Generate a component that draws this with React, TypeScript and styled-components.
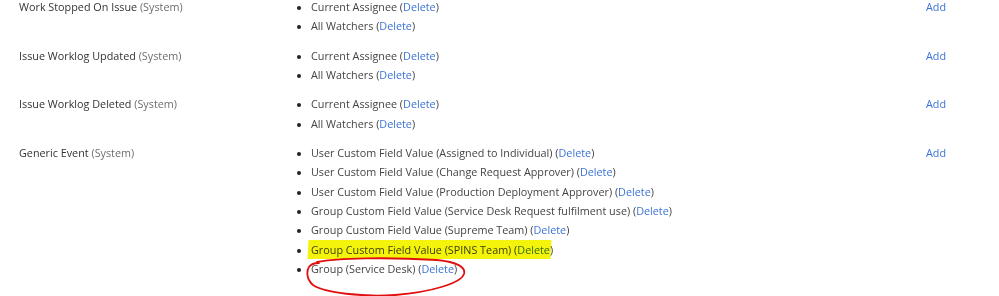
import styled, { createGlobalStyle } from 'styled-components';

const GlobalStyle = createGlobalStyle`
    html {
        overflow: hidden;
    }
    html, body {
        margin: 0;
        padding: 0;
        background: #ffffff;
    }
    body {
        font-family: "Open Sans", "Noto Sans", sans-serif;
        font-size: 10.8px;
        color: #333333;
        min-height: 296px;
    }
`;

const Table = styled.div`
    width: 999px;
    margin-top: -8px;
`;

const EventRow = styled.div`
    display: grid;
    grid-template-columns: 288px 1fr 90px;
    padding: 5px 0;
    line-height: 19.33px;
`;

const EventName = styled.div`
    padding-left: 19px;
    color: #333333;
`;

const Scope = styled.span`
    color: #6e6e6e;
`;

const List = styled.ul`
    margin: 0;
    padding: 0 0 0 23px;
    list-style: disc;
`;

const Item = styled.li`
    position: relative;
    color: #444444;
    &::marker {
        color: #222222;
        font-size: 10px;
    }
`;

const Link = styled.a`
    color: #3b73d6;
    text-decoration: none;
    cursor: pointer;
`;

const AddLink = styled(Link)`
    padding-left: 17px;
`;

const Marker = styled.span`
    position: relative;
    &::after {
        content: '';
        position: absolute;
        left: -3px;
        right: -1px;
        top: -2px;
        bottom: -2px;
        background: #f3f30c;
        mix-blend-mode: multiply;
        transform: skewX(-3deg);
    }
`;

const Scribble = styled.svg`
    position: absolute;
    left: -4px;
    top: -1px;
    overflow: visible;
    pointer-events: none;
`;

type Recipient = { label: string; marked?: boolean; circled?: boolean };

type EventDef = { name: string; recipients: Recipient[] };

const events: EventDef[] = [
    {
        name: 'Work Stopped On Issue',
        recipients: [{ label: 'Current Assignee' }, { label: 'All Watchers' }],
    },
    {
        name: 'Issue Worklog Updated',
        recipients: [{ label: 'Current Assignee' }, { label: 'All Watchers' }],
    },
    {
        name: 'Issue Worklog Deleted',
        recipients: [{ label: 'Current Assignee' }, { label: 'All Watchers' }],
    },
    {
        name: 'Generic Event',
        recipients: [
            { label: 'User Custom Field Value (Assigned to Individual)' },
            { label: 'User Custom Field Value (Change Request Approver)' },
            { label: 'User Custom Field Value (Production Deployment Approver)' },
            { label: 'Group Custom Field Value (Service Desk Request fulfilment use)' },
            { label: 'Group Custom Field Value (Supreme Team)' },
            { label: 'Group Custom Field Value (SPINS Team)', marked: true },
            { label: 'Group (Service Desk)', circled: true },
        ],
    },
];

function RecipientItem({ r }: { r: Recipient }) {
    if (r.marked) {
        return (
            <Item>
                <Marker>
                    {r.label} (<Link>Delete</Link>
                </Marker>
                )
            </Item>
        );
    }
    if (r.circled) {
        return (
            <Item>
                {r.label} (<Link>Delete</Link>)
                <Scribble width="158" height="38" viewBox="0 0 158 38">
                    <path
                        d="M10 4 C 30 0, 80 -1, 130 2 C 150 4, 159 9, 157 16 C 154 25, 125 34, 88 37 C 55 39, 18 35, 6 27 C 0 22, -1 14, 2 9 C 4 6, 8 5, 12 5"
                        fill="none"
                        stroke="#e01010"
                        strokeWidth="1.8"
                        strokeLinecap="round"
                    />
                </Scribble>
            </Item>
        );
    }
    return (
        <Item>
            {r.label} (<Link>Delete</Link>)
        </Item>
    );
}

export default function App() {
    return (
        <>
            <GlobalStyle />
            <Table>
                {events.map((ev) => (
                    <EventRow key={ev.name}>
                        <EventName>
                            {ev.name} <Scope>(System)</Scope>
                        </EventName>
                        <List>
                            {ev.recipients.map((r) => (
                                <RecipientItem key={r.label} r={r} />
                            ))}
                        </List>
                        <div>
                            <AddLink>Add</AddLink>
                        </div>
                    </EventRow>
                ))}
            </Table>
        </>
    );
}
